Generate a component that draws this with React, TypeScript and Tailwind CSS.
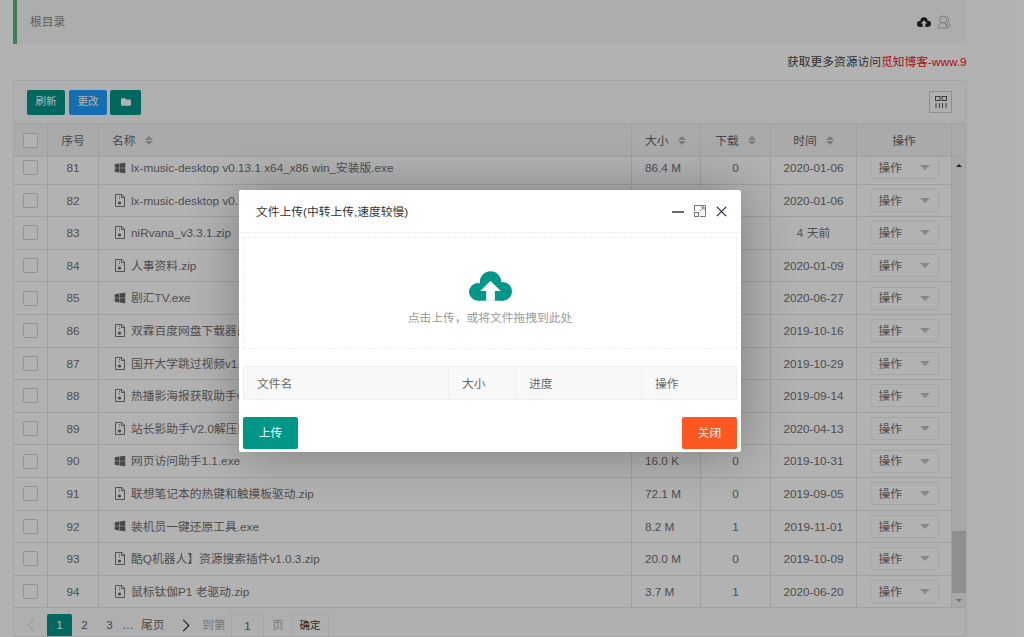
import React from "react";
import { FaWindows, FaFolder } from "react-icons/fa";

const FONT = "font-['Liberation_Sans','Noto_Sans_CJK_SC',sans-serif]";
const COLS = "grid grid-cols-[34px_51px_533px_69px_70px_86px_95px]";

type Row = { n: number; name: string; kind: "exe" | "zip"; size: string; dl: string; time: string };
const rows: Row[] = [
  { n: 81, name: "lx-music-desktop v0.13.1 x64_x86 win_安装版.exe", kind: "exe", size: "86.4 M", dl: "0", time: "2020-01-06" },
  { n: 82, name: "lx-music-desktop v0.13.1 x64_x86 win_绿色版.zip", kind: "zip", size: "86.2 M", dl: "0", time: "2020-01-06" },
  { n: 83, name: "niRvana_v3.3.1.zip", kind: "zip", size: "1.2 M", dl: "0", time: "4 天前" },
  { n: 84, name: "人事资料.zip", kind: "zip", size: "3.5 M", dl: "0", time: "2020-01-09" },
  { n: 85, name: "剧汇TV.exe", kind: "exe", size: "12.1 M", dl: "0", time: "2020-06-27" },
  { n: 86, name: "双霖百度网盘下载器最新版.zip", kind: "zip", size: "5.6 M", dl: "0", time: "2019-10-16" },
  { n: 87, name: "国开大学跳过视频v1.0.zip", kind: "zip", size: "2.4 M", dl: "0", time: "2019-10-29" },
  { n: 88, name: "热播影海报获取助手v1.0.zip", kind: "zip", size: "1.8 M", dl: "0", time: "2019-09-14" },
  { n: 89, name: "站长影助手V2.0解压即用.zip", kind: "zip", size: "9.3 M", dl: "0", time: "2020-04-13" },
  { n: 90, name: "网页访问助手1.1.exe", kind: "exe", size: "16.0 K", dl: "0", time: "2019-10-31" },
  { n: 91, name: "联想笔记本的热键和触摸板驱动.zip", kind: "zip", size: "72.1 M", dl: "0", time: "2019-09-05" },
  { n: 92, name: "装机员一键还原工具.exe", kind: "exe", size: "8.2 M", dl: "1", time: "2019-11-01" },
  { n: 93, name: "酷Q机器人】资源搜索插件v1.0.3.zip", kind: "zip", size: "20.0 M", dl: "0", time: "2019-10-09" },
  { n: 94, name: "鼠标钛伽P1 老驱动.zip", kind: "zip", size: "3.7 M", dl: "1", time: "2020-06-20" },
];

function Cloud({ color, cut, className }: { color: string; cut: string; className: string }) {
  return (
    <svg viewBox="0 0 44 30" className={className}>
      <circle cx="9" cy="21" r="9" fill={color} />
      <circle cx="22" cy="11" r="11" fill={color} />
      <circle cx="34.5" cy="20.5" r="9.5" fill={color} />
      <rect x="9" y="14" width="26" height="16" fill={color} />
      <path d="M22 9.5 L32.5 20 L26.5 20 L26.5 30 L17.5 30 L17.5 20 L11.5 20 Z" fill={cut} />
    </svg>
  );
}

function ZipIcon() {
  return (
    <svg viewBox="0 0 12 13" className="w-[12px] h-[13px] shrink-0" fill="none" stroke="#777" strokeWidth="1">
      <path d="M1.5 .5 H8 L10.5 3 V12.5 H1.5 Z" />
      <path d="M7.5 .5 V3.5 H10.5" />
      <path d="M5.5 2 V6" strokeDasharray="1 1" />
      <circle cx="5.5" cy="9" r="1.6" fill="#666" stroke="none" />
    </svg>
  );
}

function Sort() {
  return (
    <span className="inline-flex flex-col gap-[1px] ml-[9px] align-middle">
      <span className="w-0 h-0 border-x-[4px] border-x-transparent border-b-[4px] border-b-[#b2b2b2]" />
      <span className="w-0 h-0 border-x-[4px] border-x-transparent border-t-[4px] border-t-[#b2b2b2]" />
    </span>
  );
}

function Check() {
  return <span className="block w-[15px] h-[15px] border border-[#d2d2d2] rounded-[2px] bg-white" />;
}

const cell = "flex items-center border-r border-[#e6e6e6]";

export default function App() {
  return (
    <div className={`relative w-[1024px] h-[637px] overflow-hidden bg-white text-[11.75px] text-[#707070] ${FONT}`}>
      <div className="pl-[13px] w-[967px]">
        <div className="flex items-center justify-between h-[44px] bg-[#f8f8f8] border-l-[4px] border-[#5fb878] pl-[13px] pr-[16px]">
          <span className="text-[#888]">根目录</span>
          <div className="flex items-center gap-[6px]">
            <Cloud color="#222" cut="#f8f8f8" className="w-[14px] h-[10px]" />
            <svg viewBox="0 0 14 14" className="w-[14px] h-[14px]" fill="none" stroke="#a8a8a8" strokeWidth=".9">
              <circle cx="6" cy="4.5" r="3.5" />
              <path d="M1 13 C1 9.5 3 9 4.5 8 M7.5 8 C9 9 11 9.5 11 13 Z M1 13 H11 M9.5 1.5 C12 2 12.5 6 10 7.5 C12 8.5 13.5 9.5 13.5 12" />
            </svg>
          </div>
        </div>

        <div className="h-[36px] flex items-center justify-end overflow-hidden whitespace-nowrap text-[#444]">
          <div className="w-[180px] shrink-0 overflow-hidden">
            获取更多资源访问<span className="text-[#f01010]">觅知博客-www.98</span>
          </div>
        </div>

        <div className="border border-[#eee] bg-[#fbfbfb] h-[557px] flex flex-col">
          <div className="h-[43px] shrink-0 flex items-center justify-between pl-[13px] pr-[14px] border-b border-[#e6e6e6]">
            <div className="flex items-center gap-[4px]">
              <button className="w-[38px] h-[25px] rounded-[2px] bg-[#009688] text-white text-[10.5px]">刷新</button>
              <button className="w-[38px] h-[25px] rounded-[2px] bg-[#1e9fff] text-white text-[10.5px]">更改</button>
              <button className="-ml-[1px] w-[31px] h-[25px] rounded-[2px] bg-[#009688] text-white flex items-center justify-center">
                <FaFolder className="w-[10px] h-[10px]" />
              </button>
            </div>
            <button className="w-[23px] h-[22px] border border-[#ccc] flex items-center justify-center">
              <svg viewBox="0 0 12 12" className="w-[12px] h-[12px]" fill="none" stroke="#555" strokeWidth="1">
                <rect x=".5" y=".5" width="4.5" height="4" />
                <rect x="7" y=".5" width="4.5" height="4" />
                <path d="M1 7 V12 M4.5 7 V12 M7.5 7 V12 M11 7 V12" />
              </svg>
            </button>
          </div>

          <div className={`${COLS} h-[33px] shrink-0 bg-[#f4f4f4] border-b border-[#e6e6e6] text-[#666]`}>
            <div className={`${cell} justify-center`}><Check /></div>
            <div className={`${cell} justify-center pt-[1px]`}>序号</div>
            <div className={`${cell} pl-[13px] pt-[1px]`}>名称<Sort /></div>
            <div className={`${cell} pl-[13px] pt-[1px]`}>大小<Sort /></div>
            <div className={`${cell} justify-center pt-[1px]`}>下载<Sort /></div>
            <div className={`${cell} justify-center pt-[1px]`}>时间<Sort /></div>
            <div className={`${cell} justify-center pt-[1px]`}>操作</div>
          </div>

          <div className="flex h-[451px] shrink-0">
            <div className="w-[938px] overflow-hidden">
              <div className="-mt-[5px]">
                {rows.map((r) => (
                  <div key={r.n} className={`${COLS} h-[32.6px] border-b border-[#e6e6e6] bg-white`}>
                    <div className={`${cell} justify-center`}><Check /></div>
                    <div className={`${cell} justify-center`}>{r.n}</div>
                    <div className={`${cell} pl-[15px] gap-[5px] whitespace-nowrap overflow-hidden`}>
                      {r.kind === "exe" ? <FaWindows className="w-[12px] h-[12px] text-[#666] shrink-0" /> : <ZipIcon />}
                      {r.name}
                    </div>
                    <div className={`${cell} pl-[13px]`}>{r.size}</div>
                    <div className={`${cell} justify-center`}>{r.dl}</div>
                    <div className={`${cell} justify-center`}>{r.time}</div>
                    <div className={`${cell} justify-center`}>
                      <div className="w-[69px] h-[23px] border border-[#eee] rounded-[2px] flex items-center justify-between pl-[8px] pr-[8px]">
                        <span>操作</span>
                        <span className="w-0 h-0 border-x-[5px] border-x-transparent border-t-[5px] border-t-[#c2c2c2]" />
                      </div>
                    </div>
                  </div>
                ))}
              </div>
            </div>
            <div className="w-[14px] flex flex-col items-center bg-[#f1f1f1] border-b border-[#e6e6e6]">
              <div className="h-[16px] flex items-center"><span className="w-0 h-0 border-x-[3px] border-x-transparent border-b-[3px] border-b-[#333]" /></div>
              <div className="flex-1 w-full flex flex-col justify-end"><div className="h-[62px] w-full bg-[#cdcdcd]" /></div>
              <div className="h-[14px] flex items-center"><span className="w-0 h-0 border-x-[3px] border-x-transparent border-t-[3px] border-t-[#a0a0a0]" /></div>
            </div>
          </div>

          <div className="flex-1 flex items-end text-[#666]">
            <span className="w-[33px] flex justify-center pb-[4px]">
              <svg viewBox="0 0 8 14" className="w-[8px] h-[13px]" fill="none" stroke="#ccc" strokeWidth="1"><path d="M7 1 L1 7 L7 13" /></svg>
            </span>
            <span className="w-[25px] h-[22px] bg-[#009688] text-white rounded-t-[2px] flex items-center justify-center">1</span>
            <span className="w-[25px] h-[22px] flex items-center justify-center">2</span>
            <span className="w-[25px] h-[22px] flex items-center justify-center">3</span>
            <span className="w-[19px] h-[22px] flex items-center justify-start">…</span>
            <span className="w-[28px] h-[22px] flex items-center">尾页</span>
            <span className="w-[21px] h-[22px] flex items-center justify-end">
              <svg viewBox="0 0 8 14" className="w-[8px] h-[13px]" fill="none" stroke="#333" strokeWidth="1.2"><path d="M1 1 L7 7 L1 13" /></svg>
            </span>
            <span className="w-[26px] ml-[12px] h-[22px] flex items-center text-[#aaa] whitespace-nowrap">到第</span>
            <span className="ml-[3px] w-[33px] h-[22px] border border-[#eee] border-b-0 flex items-center justify-center">1</span>
            <span className="ml-[8px] w-[19px] h-[22px] flex items-center text-[#aaa]">页</span>
            <span className="w-[38px] h-[22px] border border-[#eee] border-b-0 flex items-center justify-center text-[#333] text-[10.5px]">确定</span>
          </div>
        </div>
      </div>

      <div className="absolute inset-0 bg-black/30" />

      <div className="absolute left-[239px] top-[190px] w-[502px] h-[262px] bg-white rounded-[2px] shadow-[1px_1px_50px_rgba(0,0,0,.3)] flex flex-col px-[4px]">
        <div className="-mx-[4px] h-[43px] shrink-0 flex items-center justify-between pl-[17px] pr-[14px] border-b border-[#f0f0f0] text-[#333]">
          <span className="pt-[1px]">文件上传(中转上传,速度较慢)</span>
          <div className="flex items-center gap-[10px]">
            <svg viewBox="0 0 12 12" className="w-[12px] h-[12px]" stroke="#2e2d3c" strokeWidth="1.4"><path d="M0 7 H12" /></svg>
            <svg viewBox="0 0 12 12" className="w-[12px] h-[12px]" fill="none" stroke="#777" strokeWidth="1">
              <path d="M.5 6 V.5 H11.5 V11.5 H6" />
              <rect x=".5" y="7.5" width="4" height="4" />
              <path d="M6 6 L10 2 M7 2 H10 V5" />
            </svg>
            <svg viewBox="0 0 12 12" className="w-[11px] h-[11px]" stroke="#2e2d3c" strokeWidth="1.4"><path d="M1 1 L11 11 M11 1 L1 11" /></svg>
          </div>
        </div>

        <div className="mt-[4px] h-[112px] shrink-0 border border-dashed border-[#eee] flex flex-col items-center pt-[33px]">
          <Cloud color="#009688" cut="#ffffff" className="w-[43px] h-[30px]" />
          <span className="mt-[8px] text-[#999]">点击上传，或将文件拖拽到此处</span>
        </div>

        <div className="mt-[17px] h-[34px] shrink-0 grid grid-cols-[205px_67px_126px_96px] bg-[#f8f8f8] border border-[#eee] text-[#666]">
          <div className="flex items-center pl-[13px] pt-[1px] border-r border-[#eee]">文件名</div>
          <div className="flex items-center pl-[13px] pt-[1px] border-r border-[#eee]">大小</div>
          <div className="flex items-center pl-[13px] pt-[1px] border-r border-[#eee]">进度</div>
          <div className="flex items-center pl-[13px] pt-[1px]">操作</div>
        </div>

        <div className="mt-[17px] flex justify-between">
          <button className="w-[55px] h-[32px] bg-[#009688] text-white rounded-[2px]">上传</button>
          <button className="w-[55px] h-[32px] bg-[#ff5722] text-white rounded-[2px]">关闭</button>
        </div>
      </div>
    </div>
  );
}
